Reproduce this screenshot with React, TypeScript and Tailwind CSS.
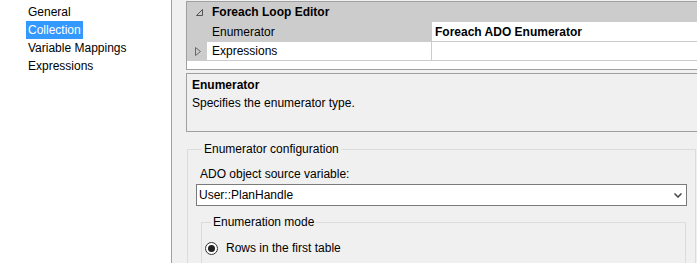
export default function App() {
  const pages = ["General", "Collection", "Variable Mappings", "Expressions"];

  return (
    <div
      className="flex h-[263px] w-[697px] overflow-hidden bg-[#f0f0f0] text-[12px] leading-[16px] text-black"
      style={{ fontFamily: '"Segoe UI", "Liberation Sans", Arial, sans-serif' }}
    >
      {/* Page list */}
      <div className="w-[172px] shrink-0 border-r border-[#a0a0a0] bg-white pt-[3px]">
        {pages.map((p) => (
          <div key={p} className="flex h-[18px] items-center pl-[26px]">
            <span
              className={`px-[2px] leading-[18px] ${
                p === "Collection" ? "bg-[#3399ff] text-white" : ""
              }`}
            >
              {p}
            </span>
          </div>
        ))}
      </div>

      {/* Right side */}
      <div className="flex min-w-0 flex-1 flex-col pl-[14px] pt-px">
        {/* Property grid */}
        <div className="shrink-0 border border-r-0 border-[#a0a0a0] bg-white">
          <div className="flex h-[20px] items-center bg-[#cccccc]">
            <div className="flex w-[20px] justify-center pl-[4px]">
              <svg width="7" height="7" viewBox="0 0 7 7">
                <path d="M6.5 0.5 L6.5 6.5 L0.5 6.5 Z" fill="none" stroke="#555" strokeWidth="1" />
              </svg>
            </div>
            <span className="pl-[5px] font-bold">Foreach Loop Editor</span>
          </div>
          <div className="flex h-[20px] border-b border-[#cccccc]">
            <div className="w-[20px] bg-[#cccccc]" />
            <div className="flex w-[225px] items-center border-r border-[#cccccc] bg-[#cccccc] pl-[5px]">
              Enumerator
            </div>
            <div className="flex flex-1 items-center pl-[3px] font-bold">Foreach ADO Enumerator</div>
          </div>
          <div className="flex h-[19px] border-b border-[#cccccc]">
            <div className="flex w-[20px] items-center justify-center bg-[#cccccc] pl-[2px]">
              <svg width="6" height="9" viewBox="0 0 6 9">
                <path d="M0.5 0.5 L5.5 4.5 L0.5 8.5 Z" fill="none" stroke="#666" strokeWidth="1" />
              </svg>
            </div>
            <div className="flex w-[225px] items-center border-r border-[#cccccc] pl-[5px]">Expressions</div>
            <div className="flex-1" />
          </div>
          <div className="h-[8px]" />
        </div>

        {/* Description */}
        <div className="mt-[3px] h-[59px] shrink-0 border border-r-0 border-[#a0a0a0] bg-[#f0f0f0] pl-[5px] pt-[2px]">
          <div className="font-bold leading-[18px]">Enumerator</div>
          <div className="leading-[18px]">Specifies the enumerator type.</div>
        </div>

        {/* Enumerator configuration */}
        <fieldset className="ml-px mr-px mt-[9px] shrink-0 border border-[#dcdcdc] pb-[40px] pl-[8px] pr-[8px]">
          <legend className="ml-[6px] px-[2px] leading-[16px]">Enumerator configuration</legend>
          <div className="ml-[4px] mt-[9px]">ADO object source variable:</div>
          <div className="mt-[2px] flex h-[22px] items-center justify-between border border-[#7a7a7a] bg-white pl-[2px] pr-[4px]">
            <span>User::PlanHandle</span>
            <svg width="8" height="5" viewBox="0 0 8 5">
              <path d="M0.5 0.5 L4 4 L7.5 0.5" fill="none" stroke="#444" strokeWidth="1.5" />
            </svg>
          </div>

          <fieldset className="ml-[5px] mr-px mt-[8px] border border-[#dcdcdc] pb-[30px] pl-[3px]">
            <legend className="ml-[6px] px-[2px] leading-[16px]">Enumeration mode</legend>
            <div className="mt-[10px] flex h-[16px] items-center gap-[8px]">
              <span className="flex h-[13px] w-[13px] items-center justify-center rounded-full border border-[#333] bg-white">
                <span className="h-[7px] w-[7px] rounded-full bg-[#222]" />
              </span>
              <span>Rows in the first table</span>
            </div>
          </fieldset>
        </fieldset>
      </div>
    </div>
  );
}
